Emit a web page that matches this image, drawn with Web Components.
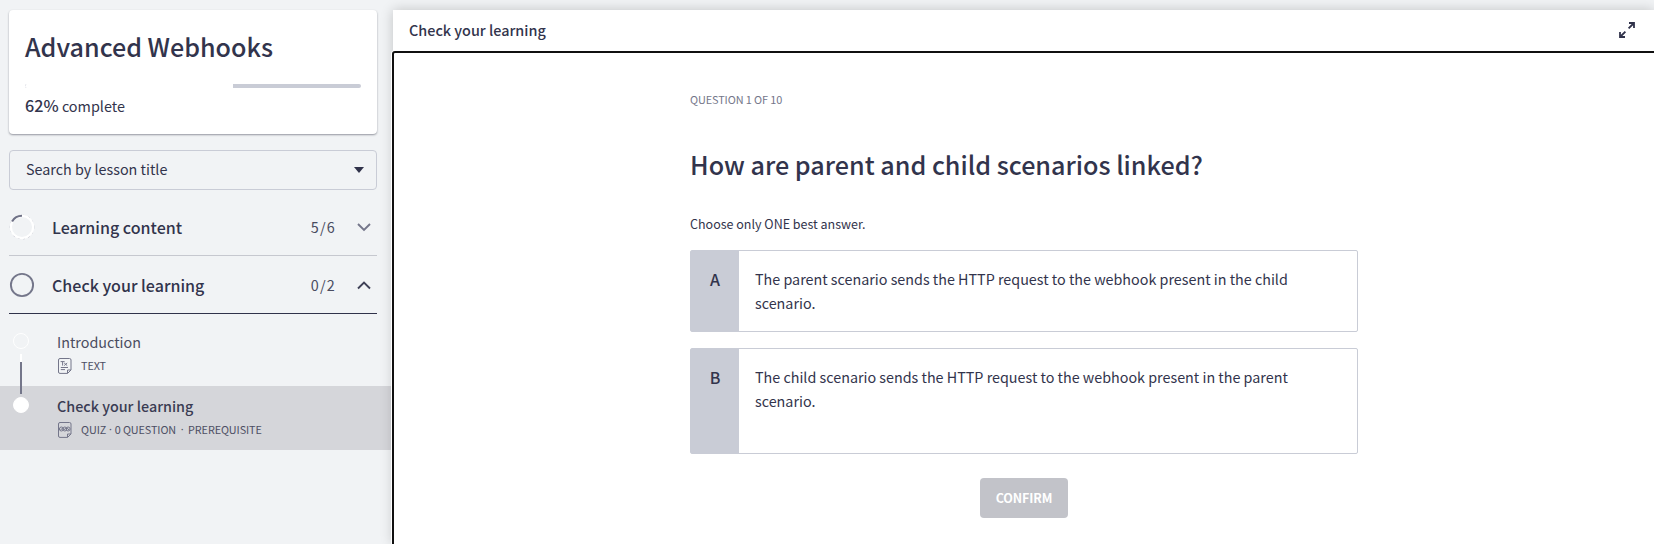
<!DOCTYPE html>
<html lang="en">
<head>
<meta charset="utf-8">
<title>Advanced Webhooks</title>
<style>
html,body{margin:0;height:100%;overflow:hidden;background:#f1f3f5}
body{font-family:"Noto Sans CJK SC","Noto Sans",sans-serif;color:#32344c}
</style>
</head>
<body>
<course-app>
  <course-sidebar slot="side">
    <progress-card heading="Advanced Webhooks" value="62"></progress-card>
    <lesson-search>Search by lesson title</lesson-search>
    <course-section state="partial" count="5/6">Learning content</course-section>
    <course-section open count="0/2">Check your learning</course-section>
    <lesson-list>
      <lesson-item kind="text" heading="Introduction"><span>TEXT</span></lesson-item>
      <lesson-item kind="quiz" heading="Check your learning" active><span>QUIZ</span><meta-dot></meta-dot><span>0 QUESTION</span><meta-dot wide></meta-dot><span>PREREQUISITE</span></lesson-item>
    </lesson-list>
  </course-sidebar>
  <lesson-header slot="main">Check your learning</lesson-header>
  <quiz-panel slot="main">
    <span slot="step">QUESTION 1 OF 10</span>
    <span slot="question">How are parent and child scenarios linked?</span>
    <span slot="hint">Choose only ONE best answer.</span>
    <quiz-option letter="A">The parent scenario sends the HTTP request to the webhook present in the child scenario.</quiz-option>
    <quiz-option letter="B" tall>The child scenario sends the HTTP request to the webhook present in the parent scenario.</quiz-option>
    <confirm-button slot="action">CONFIRM</confirm-button>
  </quiz-panel>
</course-app>
<script>
const define = (name, render) => customElements.define(name, class extends HTMLElement {
  connectedCallback() {
    if (this.shadowRoot) return;
    this.attachShadow({ mode: 'open' }).innerHTML = render(this);
  }
});

define('course-app', () => `
<style>
:host{display:grid;grid-template-columns:393px minmax(0,1fr);height:100vh;overflow:hidden}
main{margin-top:10px;display:flex;flex-direction:column;background:#fff;box-shadow:0 0 12px rgba(0,0,0,.2);min-width:0}
</style>
<slot name="side"></slot><main><slot name="main"></slot></main>`);

define('course-sidebar', () => `
<style>:host{display:flex;flex-direction:column;padding-top:10px}</style><slot></slot>`);

define('progress-card', el => `
<style>
:host{display:block;box-sizing:border-box;height:124px;margin:0 16px 0 9px;padding:20px 16px 0;background:#fff;border-radius:4px;box-shadow:0 1px 2px rgba(20,22,40,.42)}
h1{margin:0;font-size:25.1px;font-weight:500;line-height:32px;white-space:nowrap}
.bar{display:flex;height:4px;margin-top:22px;border-radius:2px;overflow:hidden;background:#c9ccd6}
.bar i{width:${el.getAttribute('value')}%;background:#fff;box-sizing:border-box;border-left:1px dotted #e4e5ea}
p{margin:5px 0 0;font-size:14.4px;line-height:24px}
b{font-size:16.2px;font-weight:500}
</style>
<h1>${el.getAttribute('heading')}</h1><div class="bar"><i></i></div><p><b>${el.getAttribute('value')}%</b> complete</p>`);

define('lesson-search', () => `
<style>
:host{display:flex;justify-content:space-between;align-items:center;box-sizing:border-box;height:40px;margin:16px 16px 8px 9px;padding:0 12px 2px 16px;border:1px solid #c9ccd6;border-radius:4px;font-size:14.35px;line-height:24px}
svg{margin-top:2px}
</style>
<slot></slot><svg width="10" height="6"><path d="M0 0H10L5 6Z" fill="#30324a"/></svg>`);

define('course-section', el => {
  const open = el.hasAttribute('open');
  const ring = el.getAttribute('state') === 'partial'
    ? `<circle cx="13" cy="13" r="11.5" fill="none" stroke="#b9bbc6" stroke-width="1.6" stroke-dasharray="2 3"/><circle cx="13" cy="13" r="11.1" fill="none" stroke="#fff" stroke-width="2.1"/><path d="M3.1 7.6A11.3 11.3 0 0 1 13 1.8" fill="none" stroke="#6f7186" stroke-width="2.1"/>`
    : `<circle cx="13" cy="13" r="11.1" fill="none" stroke="#74768a" stroke-width="1.9"/>`;
  return `
<style>
:host{display:flex;align-items:center;box-sizing:border-box;height:58px;flex:none;margin:0 16px 0 9px;border-bottom:1px solid ${open ? '#30324a' : '#c6c8cf'}}
.t{margin-left:17px;flex:1;font-size:16.05px;font-weight:500;line-height:24px}
.c{font-size:14.4px;line-height:24px;letter-spacing:1.2px;color:#4a4c60}
svg{flex:none}
.v{margin:2px 6px 0 21px}
</style>
<svg width="26" height="26">${ring}</svg><span class="t"><slot></slot></span><span class="c">${el.getAttribute('count')}</span>
<svg class="v" width="14" height="9" fill="none" stroke="${open ? '#3f4157' : '#74768a'}" stroke-width="1.9"><path d="${open ? 'M1 7.5L7 1.5L13 7.5' : 'M1 1L7 7L13 1'}"/></svg>`;
});

define('lesson-list', () => `
<style>:host{display:block;padding-top:8px}</style><slot></slot>`);

define('meta-dot', el => `
<style>:host{display:inline-flex;justify-content:center;width:${el.hasAttribute('wide') ? 12 : 8.5}px;font-family:"Noto Sans",sans-serif}</style>·`);

define('lesson-item', el => {
  const active = el.hasAttribute('active');
  const glyph = el.getAttribute('kind') === 'text'
    ? `<path d="M2.6 3.6H6.6M4.6 3.6V7.6M6.2 5L9.2 7.6M9.2 5L6.2 7.6M2.8 9.5H10M2.8 11.6H7"/>`
    : `<circle cx="3.4" cy="7" r="2"/><circle cx="6.8" cy="7" r="2"/><circle cx="10.1" cy="7" r="2"/><path d="M2.6 8L4.6 6M5.8 8L7.8 6M9.2 6L11 8"/>`;
  return `
<style>
:host{display:grid;grid-template-columns:57px 1fr;box-sizing:border-box;height:64px;${active ? 'background:#d5d6da' : ''}}
.rail{display:flex;flex-direction:column;padding:11px 0 0 13px;box-sizing:border-box;height:64px;overflow:visible}
.dot{width:16px;height:16px;box-sizing:border-box;border-radius:50%;border:1.5px solid #fff;flex:none;${active ? 'background:#fff' : ''}}
.line{position:relative;z-index:1;flex:none;width:2px;height:32px;margin:5px 0 0 7px;padding-top:8px;background:linear-gradient(#fff,#fff) 50% 0/2px 8px no-repeat,#74768a;box-sizing:content-box}
.h{margin-top:8px;font-size:14.35px;line-height:24px;font-weight:${active ? 500 : 400};color:${active ? '#3a3c53' : '#4a4c60'}}
.m{display:flex;margin-top:4px;padding-left:1px;font-size:10.8px;line-height:14.5px;color:#4d4f64;letter-spacing:-.08px;white-space:nowrap}
svg{margin-right:9px;flex:none}
</style>
<div class="rail"><div class="dot"></div>${active ? '' : '<div class="line"></div>'}</div>
<div><div class="h">${el.getAttribute('heading')}</div>
<div class="m"><svg width="14" height="16" fill="none" stroke="#74768a" stroke-width="1"><path d="M2 .5H11.5Q13 .5 13 2V12L9.6 15.4H2Q.5 15.4.5 14V2Q.5.5 2 .5ZM9.5 15.2V12H12.9"/>${glyph}</svg><slot></slot></div></div>`;
});

define('lesson-header', () => `
<style>
:host{display:flex;align-items:center;justify-content:space-between;box-sizing:border-box;height:41px;flex:none;padding:0 19px 2px 16px;font-size:14.4px;font-weight:500;line-height:24px}
svg{margin-top:1px}
</style>
<slot></slot><svg width="16" height="16" fill="none" stroke="#30324a" stroke-width="1.8"><path d="M9.6 6.4L14.5 1.5M10 1H15V6M6.4 9.6L1.5 14.5M1 10V15H6"/></svg>`);

define('quiz-panel', () => `
<style>
:host{display:block;flex:1;box-sizing:border-box;margin:0 -3px -6px -1px;padding:38px 0 0 296px;border:2px solid #101010;border-radius:3px;box-shadow:0 0 0 1px #fff;background:#fff}
.col{width:668px;display:flex;flex-direction:column}
.step{font-size:10.9px;line-height:16px;letter-spacing:-.1px;color:#74768a}
h2{margin:39px 0 0;font-size:25.15px;font-weight:500;line-height:36px}
.hint{margin:32px 0 16px;font-size:12.5px;line-height:20px}
.opts{display:flex;flex-direction:column;gap:16px}
.act{display:flex;justify-content:center;margin-top:24px}
</style>
<div class="col"><div class="step"><slot name="step"></slot></div><h2><slot name="question"></slot></h2>
<div class="hint"><slot name="hint"></slot></div><div class="opts"><slot></slot></div><div class="act"><slot name="action"></slot></div></div>`);

define('quiz-option', el => `
<style>
:host{display:grid;grid-template-columns:48px 1fr;box-sizing:border-box;height:${el.hasAttribute('tall') ? 106 : 82}px;border:1px solid #c9ccd6;border-radius:2px;line-height:24px}
.l{padding-top:16px;background:#c9ccd6;text-align:center;font-size:16px;font-weight:500}
.t{padding:16px 50px 0 16px;font-size:14.34px}
</style>
<div class="l">${el.getAttribute('letter')}</div><div class="t"><slot></slot></div>`);

define('confirm-button', () => `
<style>
:host{display:flex;justify-content:center;width:88px;height:40px;border-radius:4px;background:#c2c3c9;color:#fff;font-size:12.5px;font-weight:700;line-height:40px;letter-spacing:-.1px}
</style><slot></slot>`);
</script>
</body>
</html>
